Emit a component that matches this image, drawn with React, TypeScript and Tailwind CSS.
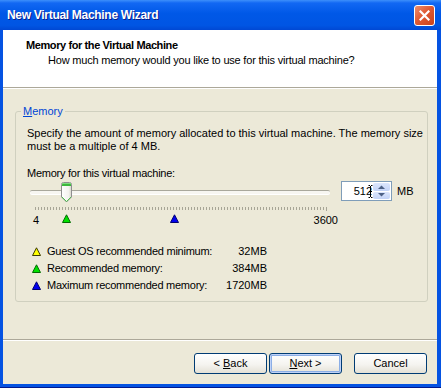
import React from 'react'

const markers = [
  { value: 384, fill: '#00E000', edge: '#006A00' },
  { value: 1720, fill: '#0000F0', edge: '#000070' },
]

function Triangle({ fill, edge }: { fill: string; edge: string }) {
  return (
    <svg width="9" height="9" viewBox="0 0 9 9" className="block">
      <path d="M4.5 0.8 L8.5 8.5 H0.5 Z" fill={fill} stroke={edge} strokeWidth="1" strokeLinejoin="miter" />
    </svg>
  )
}

function Thumb() {
  return (
    <svg width="11" height="21" viewBox="0 0 11 21" className="block">
      <defs>
        <linearGradient id="thumbBody" x1="0" y1="0" x2="1" y2="0">
          <stop offset="0" stopColor="#FFFFFF" />
          <stop offset="0.7" stopColor="#F3F3EF" />
          <stop offset="1" stopColor="#D8D6CB" />
        </linearGradient>
      </defs>
      <path d="M0.5 2.5 Q0.5 0.5 2.5 0.5 H8.5 Q10.5 0.5 10.5 2.5 V15 L5.5 20 L0.5 15 Z" fill="url(#thumbBody)" stroke="#8E8F8F" />
      <path d="M1 2.5 Q1 1 2.5 1 H8.5 Q10 1 10 2.5 V4 H1 Z" fill="#3DB83D" />
      <rect x="1" y="1" width="9" height="1" fill="#7CDB7C" />
      <path d="M1 15 L5.5 19.5 L10 15" fill="none" stroke="#4CC14C" strokeWidth="1" />
    </svg>
  )
}

function Ticks() {
  return (
    <svg width="293" height="4" className="block">
      <defs>
        <pattern id="tick" width="3" height="4" patternUnits="userSpaceOnUse">
          <rect width="1" height="3" fill="#A7A596" />
        </pattern>
      </defs>
      <rect width="291" height="4" fill="url(#tick)" />
      <rect x="291" width="1" height="4" fill="#A7A596" />
    </svg>
  )
}

function XPButton({ children, focused }: { children: React.ReactNode; focused?: boolean }) {
  return (
    <button
      className={
        focused
          ? 'h-[21px] w-[73px] rounded-[3px] border border-[#003C74] bg-[linear-gradient(180deg,#FFFFFF_0%,#F5F4F0_55%,#E4E1D6_100%)] text-[11px] leading-[13px] text-black shadow-[inset_0_0_0_1px_#C0D2F7,inset_0_0_0_2px_#8BAEE6]'
          : 'h-[21px] w-[73px] rounded-[3px] border border-[#003C74] bg-[linear-gradient(180deg,#FFFFFF_0%,#F5F4F0_55%,#E4E1D6_100%)] text-[11px] leading-[13px] text-black'
      }
    >
      {children}
    </button>
  )
}

const legend = [
  { label: 'Guest OS recommended minimum:', value: '32MB', fill: '#FFFF00', edge: '#3A3A00' },
  { label: 'Recommended memory:', value: '384MB', fill: '#00E000', edge: '#006A00' },
  { label: 'Maximum recommended memory:', value: '1720MB', fill: '#0000F0', edge: '#000070' },
]

export default function App() {
  const min = 4
  const max = 3600
  const pos = (v: number) => 5 + ((v - min) / (max - min)) * 291

  return (
    <div className="flex h-[388px] w-[441px] flex-col bg-[#0553E2] font-['Liberation_Sans',Arial,sans-serif] text-[11px] text-black">
      {/* title bar */}
      <div className="flex h-[30px] items-center justify-between bg-[linear-gradient(180deg,#3D8FFB_0%,#1268F3_10%,#0058E7_45%,#0055E3_85%,#0048D4_100%)] pl-[7px] pr-[6px]">
        <span className="text-[12px] font-bold leading-[16px] tracking-[-0.3px] text-white [text-shadow:1px_1px_0_#0B1E8C]">
          New Virtual Machine Wizard
        </span>
        <div className="flex h-[21px] w-[21px] items-center justify-center rounded-[3px] border border-white bg-[linear-gradient(135deg,#EC8E6E_0%,#E05A34_45%,#C9421C_100%)]">
          <svg width="11" height="11" viewBox="0 0 11 11">
            <path d="M1.5 1.5 L9.5 9.5 M9.5 1.5 L1.5 9.5" stroke="white" strokeWidth="2.2" strokeLinecap="square" />
          </svg>
        </div>
      </div>

      <div className="flex flex-1 flex-col pl-[3px] pr-[4px]">
        {/* header */}
        <div className="h-[57px] bg-white pl-[23px] pt-[9px]">
          <div className="font-bold leading-[13px] tracking-[-0.4px]">Memory for the Virtual Machine</div>
          <div className="mt-[2px] pl-[22px] leading-[13px] tracking-[-0.2px]">
            How much memory would you like to use for this virtual machine?
          </div>
        </div>
        <div className="h-[1px] bg-[#ACA899]" />
        <div className="h-[1px] bg-white" />

        {/* body */}
        <div className="flex flex-1 flex-col bg-[#ECE9D8]">
          <div className="relative ml-[12px] mt-[22px] h-[191px] w-[413px] rounded-[3px] border border-[#D0D0BF]">
            <span className="absolute -top-[7px] left-[5px] bg-[#ECE9D8] px-[2px] leading-[13px] text-[#0046D5]">
              <span className="underline">M</span>emory
            </span>

            <div className="px-[11px] pt-[15px]">
              <p className="whitespace-nowrap leading-[13px]">
                Specify the amount of memory allocated to this virtual machine. The memory size
                <br />
                must be a multiple of 4 MB.
              </p>
              <div className="mt-[14px] leading-[13px] tracking-[-0.25px]">Memory for this virtual machine:</div>

              <div className="mt-[1px] flex items-start">
                <div className="relative ml-[3px] w-[300px]">
                  <div className="mt-[9px] h-[4px] rounded-[2px] border-t border-[#A9A89C] bg-[#F7F6F1] shadow-[0_1px_0_#FFFFFF]" />
                  <div className="ml-[5px] mt-[13px]">
                    <Ticks />
                  </div>
                  <div className="ml-[3px] mt-[3px] flex w-[305px] justify-between leading-[13px]">
                    <span>4</span>
                    <span>3600</span>
                  </div>
                  <div className="absolute left-[31px] top-[1px]">
                    <Thumb />
                  </div>
                  {markers.map((m) => (
                    <div key={m.value} className="absolute top-[33px]" style={{ left: pos(m.value) - 4 }}>
                      <Triangle fill={m.fill} edge={m.edge} />
                    </div>
                  ))}
                </div>

                <div className="relative ml-[11px] flex h-[20px] w-[51px] items-center justify-end border border-[#7F9DB9] bg-white">
                  <span className="pr-[1px] leading-[13px]">512</span>
                  <div className="mr-[1px] flex h-[16px] w-[17px] flex-col gap-[1px]">
                    <div className="flex flex-1 items-center justify-center rounded-[2px] bg-[linear-gradient(180deg,#DCE6FC_0%,#C3D3F7_100%)]">
                      <svg width="7" height="4" viewBox="0 0 7 4">
                        <path d="M0 4 L3.5 0.5 L7 4 Z" fill="#4D6185" />
                      </svg>
                    </div>
                    <div className="flex flex-1 items-center justify-center rounded-[2px] bg-[linear-gradient(180deg,#DCE6FC_0%,#C3D3F7_100%)]">
                      <svg width="7" height="4" viewBox="0 0 7 4">
                        <path d="M0 0 L3.5 3.5 L7 0 Z" fill="#4D6185" />
                      </svg>
                    </div>
                  </div>
                  <svg width="5" height="13" viewBox="0 0 5 13" className="absolute left-[26px] top-[3px]">
                    <path d="M0.5 0.5 H2 M3 0.5 H4.5 M2.5 1 V12 M0.5 12.5 H2 M3 12.5 H4.5 M1 6.5 H4" stroke="#000" strokeWidth="1" fill="none" />
                  </svg>
                </div>
                <span className="ml-[5px] leading-[20px]">MB</span>
              </div>

              <div className="mt-[16px] flex flex-col">
                {legend.map((row) => (
                  <div key={row.label} className="flex h-[17px] items-center">
                    <div className="ml-[5px]">
                      <Triangle fill={row.fill} edge={row.edge} />
                    </div>
                    <div className="ml-[6px] flex w-[220px] leading-[13px]">
                      <span className="flex-1 tracking-[-0.25px]">{row.label}</span>
                      <span>{row.value}</span>
                    </div>
                  </div>
                ))}
              </div>
            </div>
          </div>

          <div className="mt-[37px] h-[1px] bg-[#ACA899]" />
          <div className="h-[1px] bg-white" />

          <div className="mt-[12px] flex justify-end pr-[10px]">
            <XPButton>
              &lt; <span className="underline">B</span>ack
            </XPButton>
            <div className="ml-[2px]">
              <XPButton focused>
                <span className="underline">N</span>ext &gt;
              </XPButton>
            </div>
            <div className="ml-[12px]">
              <XPButton>Cancel</XPButton>
            </div>
          </div>
        </div>
      </div>
      <div className="h-[3px]" />
      <div className="h-[1px] bg-[#00188C]" />
    </div>
  )
}
